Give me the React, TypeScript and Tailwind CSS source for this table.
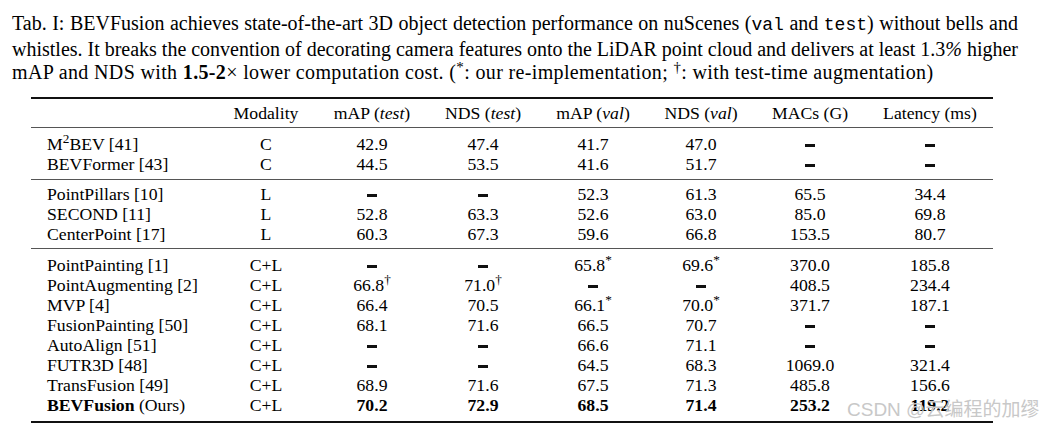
import React from "react";

type Cell = React.ReactNode;

// LaTeX 风格的短横线
const dash = <span className="inline-block w-[10px] h-[3px] bg-[#111] align-middle" />;

const groups: Cell[][][] = [
  [
    [<>M<sup>2</sup>BEV [41]</>, "C", "42.9", "47.4", "41.7", "47.0", dash, dash],
    ["BEVFormer [43]", "C", "44.5", "53.5", "41.6", "51.7", dash, dash],
  ],
  [
    ["PointPillars [10]", "L", dash, dash, "52.3", "61.3", "65.5", "34.4"],
    ["SECOND [11]", "L", "52.8", "63.3", "52.6", "63.0", "85.0", "69.8"],
    ["CenterPoint [17]", "L", "60.3", "67.3", "59.6", "66.8", "153.5", "80.7"],
  ],
  [
    ["PointPainting [1]", "C+L", dash, dash, <>65.8<sup>*</sup></>, <>69.6<sup>*</sup></>, "370.0", "185.8"],
    ["PointAugmenting [2]", "C+L", <>66.8<sup>†</sup></>, <>71.0<sup>†</sup></>, dash, dash, "408.5", "234.4"],
    ["MVP [4]", "C+L", "66.4", "70.5", <>66.1<sup>*</sup></>, <>70.0<sup>*</sup></>, "371.7", "187.1"],
    ["FusionPainting [50]", "C+L", "68.1", "71.6", "66.5", "70.7", dash, dash],
    ["AutoAlign [51]", "C+L", dash, dash, "66.6", "71.1", dash, dash],
    ["FUTR3D [48]", "C+L", dash, dash, "64.5", "68.3", "1069.0", "321.4"],
    ["TransFusion [49]", "C+L", "68.9", "71.6", "67.5", "71.3", "485.8", "156.6"],
    [
      <><b>BEVFusion</b> (Ours)</>,
      "C+L",
      <b>70.2</b>,
      <b>72.9</b>,
      <b>68.5</b>,
      <b>71.4</b>,
      <b>253.2</b>,
      <b>119.2</b>,
    ],
  ],
];

const cols = "grid grid-cols-[195px_80px_132px_90px_130px_86px_132px_117px]";

function Row({ cells }: { cells: Cell[] }) {
  return (
    <div className={`${cols} h-[20px] leading-[20px] items-center`}>
      {cells.map((c, i) => (
        <div
          key={i}
          className={
            i === 0
              ? "pl-[16px] whitespace-nowrap"
              : i === 7
              ? "text-center pr-[9px] whitespace-nowrap"
              : "text-center whitespace-nowrap"
          }
        >
          {c}
        </div>
      ))}
    </div>
  );
}

export default function App() {
  const pads = ["pt-[6px] pb-[5px]", "pt-[4px] pb-[4px]", "pt-[6px] pb-[6px]"];

  return (
    <div className="relative w-[1042px] h-[428px] bg-white text-black font-['Liberation_Serif',serif] overflow-hidden">
      {/* 表格标题 */}
      <div className="w-[1030px] px-[12px] pt-[12px] text-[20px] leading-[23.5px]">
        <div className="[text-align-last:justify] whitespace-nowrap [word-spacing:-3.5px]">
          Tab. I: BEVFusion achieves state-of-the-art 3D object detection performance on nuScenes (
          <span className="font-['Liberation_Mono',monospace] text-[18px]">val</span> and{" "}
          <span className="font-['Liberation_Mono',monospace] text-[18px]">test</span>) without bells and
        </div>
        <div className="[text-align-last:justify] whitespace-nowrap [word-spacing:-3.5px]">
          whistles. It breaks the convention of decorating camera features onto the LiDAR point cloud and delivers at least 1.3<i>%</i> higher
        </div>
        <div className="whitespace-nowrap tracking-[0.35px]">
          mAP and NDS with <b>1.5-2</b>× lower computation cost. (<sup>*</sup>: our re-implementation; <sup>†</sup>: with test-time augmentation)
        </div>
      </div>

      {/* 表格 */}
      <div className="ml-[31px] mt-[12px] w-[962px] text-[17.7px]">
        <div className="border-t-2 border-[#111]" />
        <div className={`${cols} h-[28px] leading-[20px] items-center`}>
          <div />
          <div className="text-center">Modality</div>
          <div className="text-center">mAP (<i>test</i>)</div>
          <div className="text-center whitespace-nowrap">NDS (<i>test</i>)</div>
          <div className="text-center">mAP (<i>val</i>)</div>
          <div className="text-center whitespace-nowrap">NDS (<i>val</i>)</div>
          <div className="text-center">MACs (G)</div>
          <div className="text-center pr-[9px] whitespace-nowrap">Latency (ms)</div>
        </div>
        {groups.map((g, gi) => (
          <div key={gi} className={`border-t border-[#555] ${pads[gi]}`}>
            {g.map((r, ri) => (
              <Row key={ri} cells={r} />
            ))}
          </div>
        ))}
        <div className="border-t-2 border-[#111]" />
      </div>

      {/* 水印 */}
      <div className="absolute left-[847px] top-[398px] text-[19px] leading-[24px] text-[#c8c8c8] font-['Liberation_Sans','Noto_Sans_CJK_SC',sans-serif] whitespace-nowrap">
        CSDN @云编程的加缪
      </div>
    </div>
  );
}
